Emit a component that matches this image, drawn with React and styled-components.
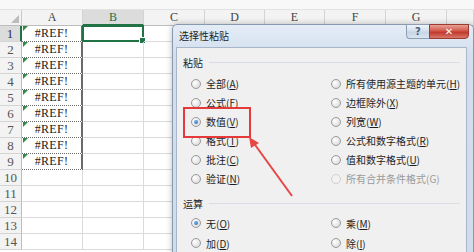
import React from "react";
import styled, { createGlobalStyle, css } from "styled-components";

const GlobalStyle = createGlobalStyle`
  html, body {
    margin: 0;
    padding: 0;
    background: #ffffff;
    overflow: hidden;
  }
`;

const Page = styled.div`
  position: relative;
  width: 474px;
  height: 252px;
  overflow: hidden;
  background: #ffffff;
`;

// Spreadsheet ==============

const FormulaStrip = styled.div`
  height: 10px;
  background: #f8f8f8;
  border-bottom: 1px solid #e2e2e2;
  box-sizing: border-box;
`;

const Sheet = styled.div`
  display: grid;
  grid-template-columns: 22px 61px 61px 61px 60px 60px 61px 61px 1fr;
  grid-auto-rows: 16px;
  font-family: "Liberation Serif", "Noto Sans CJK SC", serif;
`;

const Corner = styled.div`
  position: relative;
  background: #f3f3f3;
  border-right: 1px solid #c9c9c9;
  border-bottom: 1px solid #bdbdbd;
  box-sizing: border-box;

  &::after {
    content: "";
    position: absolute;
    right: 2px;
    bottom: 2px;
    border-left: 8px solid transparent;
    border-bottom: 8px solid #bcbcbc;
  }
`;

const ColHead = styled.div`
  display: flex;
  align-items: center;
  justify-content: center;
  font-size: 12px;
  color: #444;
  background: #f3f3f3;
  border-right: 1px solid #d4d4d4;
  border-bottom: 1px solid #bdbdbd;
  box-sizing: border-box;

  ${({ $active }) =>
    $active &&
    css`
      background: #dcdcdc;
      color: #217346;
      border-bottom: 2px solid #217346;
    `}
`;

const RowHead = styled.div`
  display: flex;
  align-items: center;
  justify-content: center;
  font-size: 13px;
  color: #555;
  background: #f3f3f3;
  border-right: 1px solid #bdbdbd;
  border-bottom: 1px solid #d4d4d4;
  box-sizing: border-box;

  ${({ $active }) =>
    $active &&
    css`
      background: #dcdcdc;
      color: #333;
      border-right: 2px solid #217346;
    `}
`;

const Cell = styled.div`
  position: relative;
  border-right: 1px solid #dadada;
  border-bottom: 1px solid #dadada;
  box-sizing: border-box;
`;

const RefCell = styled(Cell)`
  display: flex;
  align-items: center;
  justify-content: center;
  font-size: 12px;
  color: #1a1a1a;
  letter-spacing: 0.3px;
  border-right: 2px solid #6a6a6a;
  border-bottom: 1px dotted #6a6a6a;

  &::before {
    content: "";
    position: absolute;
    left: 1px;
    top: 0;
    border-top: 5px solid #2e8b43;
    border-right: 5px solid transparent;
  }
`;

const SelectedCell = styled(Cell)`
  border: 2px solid #217346;
  margin: -1px 0 0 -1px;

  &::after {
    content: "";
    position: absolute;
    right: -4px;
    bottom: -4px;
    width: 5px;
    height: 5px;
    background: #217346;
    border: 1px solid #fff;
  }
`;

// Dialog ==============

const Dialog = styled.div`
  position: absolute;
  left: 172px;
  top: 24px;
  width: 302px;
  height: 240px;
  box-sizing: border-box;
  border: 1px solid #8898ae;
  border-radius: 5px 5px 0 0;
  background: linear-gradient(#e4ecf6, #d3dfee 30px, #cfdcec);
  font-family: "Noto Sans CJK SC", "Noto Sans", sans-serif;
  color: #1e1e1e;
  box-shadow: 0 0 6px rgba(0, 0, 0, 0.25);
`;

const TitleBar = styled.div`
  display: flex;
  align-items: flex-start;
  height: 21px;
  padding-left: 6px;
`;

const Title = styled.span`
  font-size: 10px;
  line-height: 21px;
`;

const CaptionButtons = styled.div`
  display: flex;
  margin-left: auto;
  margin-right: 4px;
  margin-top: -1px;
`;

const CaptionButton = styled.div`
  display: flex;
  align-items: center;
  justify-content: center;
  height: 15px;
  box-sizing: border-box;
  font-family: "DejaVu Sans", sans-serif;
  font-weight: bold;
  font-size: 10px;

  ${({ $close }) =>
    $close
      ? css`
          width: 40px;
          color: #fff;
          border: 1px solid #9b3a2e;
          border-radius: 0 0 4px 0;
          background: linear-gradient(#e8a196, #d3584a 45%, #c0392b 55%, #d8776a);
        `
      : css`
          width: 23px;
          color: #4a5f80;
          border: 1px solid #8d9db3;
          border-right: none;
          border-radius: 0 0 0 4px;
          background: linear-gradient(#f0f4f9, #d6e0ec 45%, #c6d4e5 55%, #dbe5f0);
        `}
`;

const Content = styled.div`
  margin: 1px 6px 0 3px;
  height: 220px;
  box-sizing: border-box;
  background: #f0f0f0;
  border: 1px solid #a7b6c9;
  padding: 0 6px 0 6px;
`;

const SectionHeader = styled.div`
  display: flex;
  align-items: center;
  height: 14px;
  margin-top: ${({ $top }) => $top}px;
  font-size: 10px;

  &::after {
    content: "";
    flex: 1;
    height: 1px;
    margin-left: 6px;
    background: #d7dde3;
  }
`;

const Options = styled.div`
  display: grid;
  grid-template-columns: 140px 1fr;
  grid-auto-rows: ${({ $pitch }) => $pitch}px;
  margin-top: ${({ $top }) => $top}px;
  padding-left: 8px;
`;

const Option = styled.label`
  display: flex;
  align-items: center;
  gap: 5px;
  font-size: 10px;
  color: ${({ $disabled }) => ($disabled ? "#9a9a9a" : "#1e1e1e")};
  white-space: nowrap;

  u {
    text-decoration: ${({ $disabled }) => ($disabled ? "none" : "underline")};
  }
`;

const Radio = styled.span`
  position: relative;
  width: 10px;
  height: 10px;
  flex: none;
  border-radius: 50%;
  box-sizing: border-box;
  border: 1px solid ${({ $disabled }) => ($disabled ? "#cfcfcf" : "#9a9a9a")};
  background: ${({ $disabled }) =>
    $disabled
      ? "#f2f2f2"
      : "radial-gradient(circle at 35% 35%, #ffffff, #dcdcdc 80%)"};

  ${({ $checked }) =>
    $checked &&
    css`
      &::after {
        content: "";
        position: absolute;
        left: 2px;
        top: 2px;
        width: 4px;
        height: 4px;
        border-radius: 50%;
        background: radial-gradient(circle at 35% 35%, #7fb4ea, #1d5ea8);
      }
    `}
`;

// Annotation ==============

const Highlight = styled.div`
  position: absolute;
  left: 183px;
  top: 107px;
  width: 68px;
  height: 31px;
  box-sizing: border-box;
  border: 2px solid #e5393a;
`;

const Arrow = styled.svg`
  position: absolute;
  left: 240px;
  top: 130px;
  overflow: visible;
`;

const pasteOptions = [
  ["全部", "A"],
  ["所有使用源主题的单元", "H"],
  ["公式", "F"],
  ["边框除外", "X"],
  ["数值", "V", true],
  ["列宽", "W"],
  ["格式", "T"],
  ["公式和数字格式", "R"],
  ["批注", "C"],
  ["值和数字格式", "U"],
  ["验证", "N"],
  ["所有合并条件格式", "G", false, true],
];

const opOptions = [
  ["无", "O", true],
  ["乘", "M"],
  ["加", "D"],
  ["除", "I"],
];

const columns = ["A", "B", "C", "D", "E", "F", "G", ""];

function RadioOption({ label, hotkey, checked, disabled }) {
  return (
    <Option $disabled={disabled}>
      <Radio $checked={checked} $disabled={disabled} />
      <span>
        {label}(<u>{hotkey}</u>)
      </span>
    </Option>
  );
}

export default function App() {
  const rows = Array.from({ length: 14 }, (_, i) => i + 1);

  return (
    <Page>
      <GlobalStyle />
      <FormulaStrip />
      <Sheet>
        <Corner />
        {columns.map((c, i) => (
          <ColHead key={i} $active={c === "B"}>
            {c}
          </ColHead>
        ))}
        {rows.map(r => (
          <React.Fragment key={r}>
            <RowHead $active={r === 1}>{r}</RowHead>
            {r <= 9 ? <RefCell>#REF!</RefCell> : <Cell />}
            {r === 1 ? <SelectedCell /> : <Cell />}
            {columns.slice(2).map((c, i) => (
              <Cell key={i} />
            ))}
          </React.Fragment>
        ))}
      </Sheet>

      <Dialog>
        <TitleBar>
          <Title>选择性粘贴</Title>
          <CaptionButtons>
            <CaptionButton>?</CaptionButton>
            <CaptionButton $close>✕</CaptionButton>
          </CaptionButtons>
        </TitleBar>
        <Content>
          <SectionHeader $top={7}>粘贴</SectionHeader>
          <Options $pitch={19} $top={5}>
            {pasteOptions.map(([label, key, checked, disabled]) => (
              <RadioOption
                key={key}
                label={label}
                hotkey={key}
                checked={checked}
                disabled={disabled}
              />
            ))}
          </Options>
          <SectionHeader $top={8}>运算</SectionHeader>
          <Options $pitch={20} $top={3}>
            {opOptions.map(([label, key, checked]) => (
              <RadioOption key={key} label={label} hotkey={key} checked={checked} />
            ))}
          </Options>
        </Content>
      </Dialog>

      <Highlight />
      <Arrow width="60" height="70" viewBox="0 0 60 70">
        <line x1="52" y1="66" x2="13" y2="12" stroke="#e84545" strokeWidth="2" />
        <polygon points="9,7 19,13 11,18" fill="#e84545" />
      </Arrow>
    </Page>
  );
}
